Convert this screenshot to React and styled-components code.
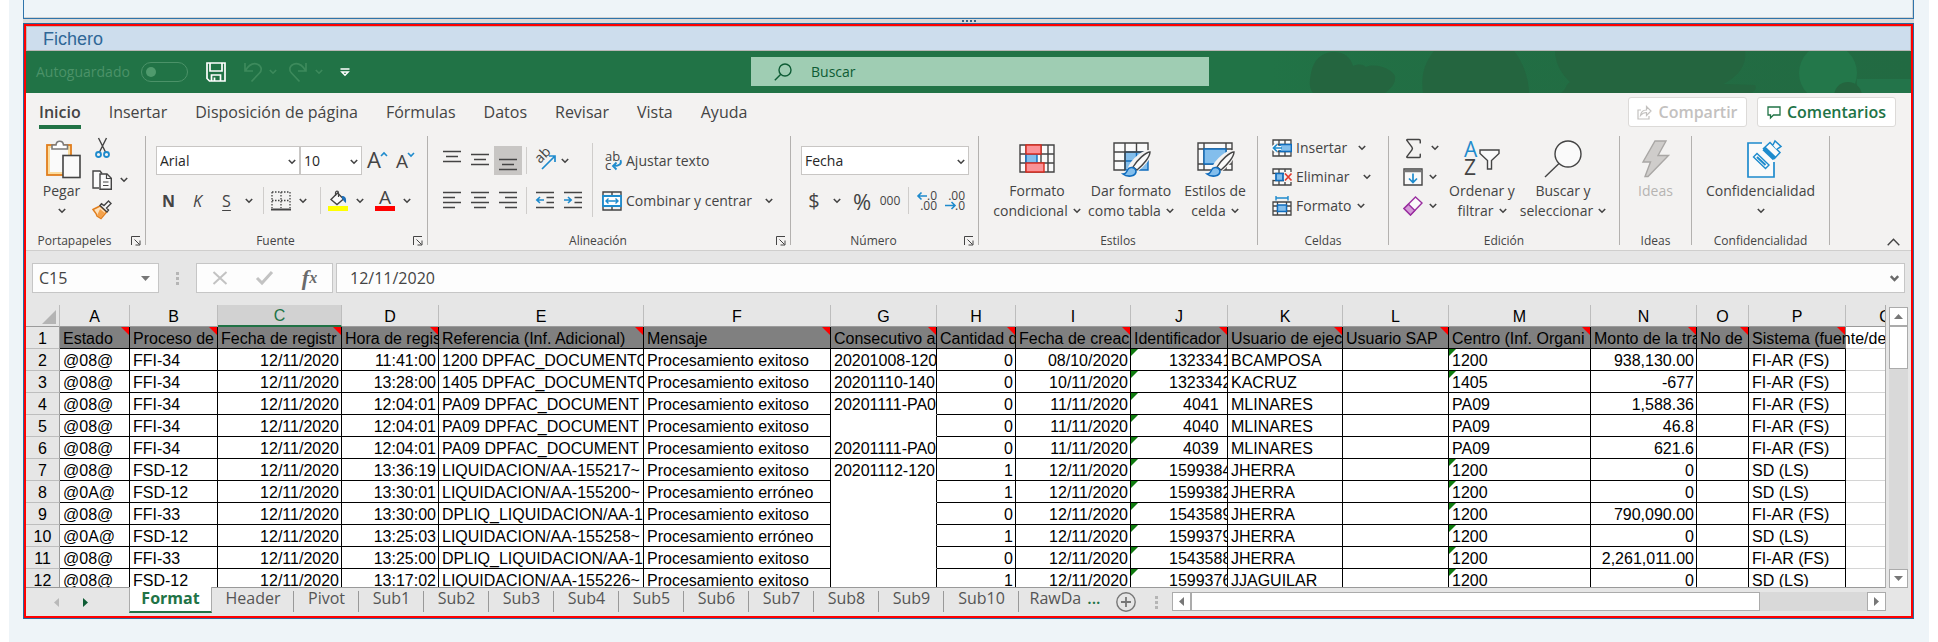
import React from 'react';
import styled, { createGlobalStyle, css } from 'styled-components';
import { Sigma } from 'lucide-react';

const UI = '"Open Sans", "Noto Sans", sans-serif';
const GRID = '"Liberation Sans", Arial, sans-serif';
const INK = '#444444';
const BLUE = '#1e8bcd';
const GREEN = '#217346';

const Global = createGlobalStyle`
  *, *::before, *::after { box-sizing: border-box; }
  body { margin: 0; background: #ffffff; font-family: ${UI}; color: ${INK}; }
  button, input, select { font: inherit; color: inherit; margin: 0; padding: 0; border: 0; border-radius: 0; background: none; }
  button { cursor: pointer; }
  svg { display: block; flex: none; overflow: visible; }
`;

/* ---------- host page ---------- */

const Page = styled.main`
  min-height: 100vh;
  margin: 0 9px;
  padding: 0 15px 23px 14px;
  background: #eef4f8;
`;
const UpperPanel = styled.section`
  height: 19px;
  border: 1px solid #2f74ab;
  border-top: 0;
  box-shadow: inset -1px -1px 0 #d2d2d2;
`;
const Splitter = styled.div`
  height: 4px;
  display: flex;
  justify-content: center;
  align-items: center;
  gap: 2px;
  background: #dadada;
`;
const SplitterDot = styled.i`
  width: 2px;
  height: 2px;
  background: #3c6483;
`;
const LowerPanel = styled.section`
  border: 1px solid #2a6a9c;
`;
const Window = styled.div`
  border: 2px solid #ff0000;
  background: #e6e6e6;
  overflow: hidden;
`;
const PanelTitle = styled.h1`
  margin: 0;
  height: 25px;
  padding-left: 16px;
  border: 1px solid #b8b8b8;
  background: #cddded;
  font: 400 18px/25px ${GRID};
  color: #2f6797;
`;

/* ---------- title bar ---------- */

const TitleBar = styled.header`
  position: relative;
  height: 42px;
  display: grid;
  grid-template-columns: minmax(0, 725fr) 458px minmax(0, 702fr);
  align-items: center;
  background: ${GREEN};
`;
const BarArt = styled.svg`
  position: absolute;
  right: 0;
  top: 0;
  overflow: hidden;
`;
const QuickAccess = styled.div`
  display: flex;
  align-items: center;
  padding-left: 10px;
  color: #4b9268;
  font-size: 14px;
  line-height: 20px;
`;
const AutoSave = styled.label`
  display: flex;
  align-items: center;
  justify-content: space-between;
  width: 152px;
`;
const Toggle = styled.input`
  appearance: none;
  width: 47px;
  height: 20px;
  border: 1px solid #4b9268;
  border-radius: 10px;
  &::before {
    content: '';
    display: block;
    width: 10px;
    height: 10px;
    margin: 4px;
    border-radius: 50%;
    background: #4f9a6d;
  }
`;
const BarButton = styled.button`
  display: flex;
  align-items: center;
  justify-content: center;
  width: ${(p) => p.$w}px;
  height: 28px;
  color: #3d8a5c;
`;
const Search = styled.label`
  display: flex;
  align-items: center;
  height: 29px;
  margin-bottom: 1px;
  padding-left: 23px;
  gap: 19px;
  background: #9fcdb3;
  color: #0e5c35;
  input { flex: 1; min-width: 0; height: 29px; font-size: 14px; outline: 0; }
  input::placeholder { color: #0e5c35; opacity: 1; }
`;

/* ---------- ribbon ---------- */

const TabBar = styled.div`
  display: flex;
  align-items: flex-start;
  justify-content: space-between;
  height: 43px;
  padding: 4px 15px 0 13px;
  background: #f3f2f1;
`;
const Tabs = styled.nav`
  display: flex;
  gap: 28px;
`;
const Tab = styled.button`
  height: 32px;
  padding: 0 0 2px;
  font-size: 16px;
  line-height: 26px;
  ${(p) => p.$active && css`
    font-weight: 600;
    border-bottom: 4px solid ${GREEN};
    padding: 2px 0 0;
  `}
`;
const TabActions = styled.div`
  display: flex;
  gap: 10px;
`;
const ActionButton = styled.button`
  display: flex;
  align-items: center;
  justify-content: center;
  gap: 6px;
  width: ${(p) => p.$w}px;
  height: 30px;
  border: 1px solid #dcdad8;
  border-radius: 3px;
  background: #ffffff;
  font-size: 16px;
  font-weight: 600;
  color: ${(p) => (p.disabled ? '#c3c1bf' : GREEN)};
`;
const Ribbon = styled.div`
  display: flex;
  height: 115px;
  border-bottom: 1px solid #cfcecd;
  background: #f3f2f1;
`;
const Group = styled.section`
  flex: none;
  display: flex;
  flex-direction: column;
  width: ${(p) => p.$w}px;
`;
const Divider = styled.i`
  flex: none;
  width: 1px;
  height: 109px;
  background: #b3b1af;
`;
const GroupBody = styled.div`
  display: flex;
  height: 96px;
  padding-left: ${(p) => p.$pad || 0}px;
`;
const GroupFoot = styled.footer`
  display: flex;
  align-items: center;
  height: 18px;
  font-size: 12px;
  line-height: 16px;
  span { flex: 1; text-align: center; }
`;
const Launcher = styled.button`
  width: 22px;
  height: 10px;
  padding-left: 8px;
`;
const TwoRows = styled.div`
  display: flex;
  flex-direction: column;
  gap: 11px;
  padding-top: 10px;
  padding-left: ${(p) => p.$pad || 0}px;
  width: ${(p) => (p.$w ? `${p.$w}px` : 'auto')};
`;
const ThreeRows = styled.div`
  display: flex;
  flex-direction: column;
  gap: 5px;
  width: ${(p) => (p.$w ? `${p.$w}px` : 'auto')};
`;
const Row = styled.div`
  display: flex;
  align-items: center;
  height: ${(p) => p.$h || 29}px;
  padding-left: ${(p) => p.$pad || 0}px;
`;
const Tool = styled.button`
  flex: none;
  display: flex;
  align-items: center;
  justify-content: center;
  width: ${(p) => p.$w || 28}px;
  height: ${(p) => p.$h || 29}px;
  font-size: ${(p) => p.$size || 16}px;
  line-height: 22px;
  font-weight: ${(p) => (p.$bold ? 700 : 400)};
  font-style: ${(p) => (p.$italic ? 'italic' : 'normal')};
  text-decoration: ${(p) => (p.$underline ? 'underline' : 'none')};
  text-underline-offset: 3px;
  background: ${(p) => (p.$pressed ? '#c8c6c4' : 'none')};
`;
const TextTool = styled.button`
  display: flex;
  align-items: center;
  gap: 4px;
  height: ${(p) => p.$h || 29}px;
  font-size: 14px;
  line-height: 20px;
  white-space: nowrap;
`;
const Rule = styled.i`
  flex: none;
  width: 1px;
  height: ${(p) => (p.$tall ? 74 : 27)}px;
  margin: ${(p) => (p.$tall ? '7px 0 0 5px' : `0 ${p.$gap}px`)};
  background: #cfcdcb;
`;
const SelectBox = styled.span`
  position: relative;
  width: ${(p) => p.$w}px;
  height: 29px;
  select {
    appearance: none;
    width: 100%;
    height: 29px;
    padding-left: 3px;
    border: 1px solid #c8c6c4;
    background: #ffffff;
    font-size: 14px;
    color: #262626;
  }
  svg { position: absolute; right: 4px; top: 13px; pointer-events: none; }
`;
const BigTool = styled.button`
  flex: none;
  display: flex;
  flex-direction: column;
  align-items: center;
  justify-content: flex-start;
  width: ${(p) => p.$w}px;
  height: 90px;
  padding-left: ${(p) => p.$pad || 0}px;
  font-size: 14px;
  line-height: 20px;
  white-space: nowrap;
  color: ${(p) => (p.disabled ? '#b6b4b2' : INK)};
`;
const BigIcon = styled.span`
  display: flex;
  align-items: center;
  height: 45px;
`;
const BigLine = styled.span`
  display: flex;
  align-items: center;
  gap: 5px;
  height: 20px;
`;
const RibbonEnd = styled.div`
  flex: 1;
  display: flex;
  justify-content: flex-end;
  align-items: flex-end;
  padding: 0 11px 4px 0;
`;

/* ---------- formula bar ---------- */

const FormulaBar = styled.div`
  display: flex;
  align-items: center;
  padding: 12px 6px;
  font-size: 16px;
`;
const Field = styled.div`
  display: flex;
  align-items: center;
  height: 30px;
  width: ${(p) => (p.$w ? `${p.$w}px` : 'auto')};
  flex: ${(p) => (p.$w ? 'none' : '1')};
  padding-right: ${(p) => p.$end || 0}px;
  border: 1px solid #c6c6c6;
  background: #fdfdfd;
  input { flex: 1; min-width: 0; height: 28px; padding-left: ${(p) => p.$pad}px; outline: 0; }
`;
const Grip = styled.span`
  display: grid;
  align-content: center;
  justify-content: center;
  gap: 2px;
  width: ${(p) => p.$w}px;
  i { width: 3px; height: 3px; background: #b5b5b5; }
`;
const FormulaKeys = styled.div`
  display: flex;
  width: 137px;
  height: 30px;
  margin-right: 3px;
  border: 1px solid #c6c6c6;
  background: #fdfdfd;
`;
const FormulaKey = styled.button`
  flex: 1;
  display: flex;
  align-items: center;
  justify-content: center;
`;
const Fx = styled(FormulaKey)`
  font: italic 700 22px/26px "Liberation Serif", serif;
  color: #6a6a6a;
  small { font-size: 16px; }
`;

/* ---------- sheet ---------- */

const SheetArea = styled.div`
  display: flex;
  gap: 3px;
  padding-right: 3px;
`;
const Viewport = styled.div`
  flex: 1;
  min-width: 0;
  height: 283px;
  overflow: hidden;
  border-right: 1px solid #ababab;
  border-bottom: 1px solid #999999;
`;
const Sheet = styled.table`
  table-layout: fixed;
  width: 1900px;
  border-collapse: separate;
  border-spacing: 0;
  font: 400 16px/19px ${GRID};
  color: #000000;
  white-space: nowrap;
`;
const ColHead = styled.th`
  height: 22px;
  padding: 2px 0 0;
  font-weight: 400;
  border-right: 1px solid #bdbdbd;
  border-bottom: 1px solid #9b9b9b;
  background: #e6e6e6;
  ${(p) => p.$active && css`
    color: ${GREEN};
    background: #d2d2d2;
    border-bottom: 2px solid ${GREEN};
    line-height: 18px;
  `}
`;
const Corner = styled.i`
  display: block;
  width: 0;
  height: 0;
  margin: 0 3px 0 auto;
  border-bottom: 14px solid #b4b4b4;
  border-left: 14px solid transparent;
`;
const RowHead = styled.th`
  height: 22px;
  padding: 2px 0 0;
  font-weight: 400;
  border-right: 1px solid #9b9b9b;
  border-bottom: 1px solid #bdbdbd;
  background: #e6e6e6;
`;
const FieldHead = styled.th`
  position: relative;
  height: 22px;
  padding: 2px 0 0 3px;
  overflow: ${(p) => (p.$spill ? 'visible' : 'hidden')};
  text-align: left;
  font-weight: 400;
  background: #808080;
  border-right: 1px solid ${(p) => (p.$spill ? '#808080' : '#000000')};
  border-bottom: 1px solid #000000;
  &::after {
    content: '';
    position: absolute;
    top: 0;
    right: 0;
    border-top: 8px solid #ff0000;
    border-left: 8px solid transparent;
  }
`;
const Cell = styled.td`
  position: relative;
  height: 22px;
  padding: 2px 2px 0 ${(p) => p.$indent || 3}px;
  overflow: hidden;
  text-overflow: clip;
  text-align: ${(p) => (p.$right ? 'right' : 'left')};
  background: #ffffff;
  border-right: 1px solid #000000;
  border-bottom: 1px solid ${(p) => (p.$open ? '#ffffff' : '#000000')};
  ${(p) => p.$flag && css`
    &::before {
      content: '';
      position: absolute;
      top: 0;
      left: 0;
      border-top: 7px solid #0f7b0f;
      border-right: 7px solid transparent;
    }
  `}
`;
const EmptyCell = styled.td`
  height: 22px;
  padding: 0;
  background: #ffffff;
  border-bottom: 1px solid #d4d4d4;
`;
const VScroll = styled.div`
  display: flex;
  flex-direction: column;
  width: 19px;
  margin-top: 2px;
  background: #d9d9d9;
`;
const HScroll = styled.div`
  flex: 1;
  display: flex;
  height: 19px;
  margin-top: 4px;
  background: #d9d9d9;
`;
const ScrollKey = styled.button`
  flex: none;
  display: flex;
  align-items: center;
  justify-content: center;
  width: 19px;
  height: 19px;
  border: 1px solid #ababab;
  background: #ffffff;
`;
const Thumb = styled.i`
  border: 1px solid #ababab;
  background: #ffffff;
  ${(p) => (p.$vertical
    ? css`height: 43px; margin-bottom: auto;`
    : css`flex: 1; margin-right: 107px;`)}
`;
const SheetBar = styled.div`
  display: flex;
  height: 28px;
  padding-right: 25px;
`;
const SheetNav = styled.div`
  flex: none;
  display: flex;
  align-items: center;
  gap: 24px;
  width: 103px;
  padding-left: 28px;
`;
const SheetTab = styled.button`
  flex: none;
  width: ${(p) => p.$w}px;
  height: 25px;
  padding-bottom: 4px;
  font-size: 16px;
  line-height: 21px;
  color: #555555;
  background: ${(p) => (p.$last ? 'none' : 'linear-gradient(#999999, #999999) no-repeat right 3px / 1px 21px')};
  ${(p) => p.$active && css`
    position: relative;
    margin-top: -1px;
    height: 26px;
    padding-bottom: 2px;
    color: ${GREEN};
    font-weight: 700;
    background: #ffffff;
    border: 1px solid #ababab;
    border-top: 0;
    border-bottom: 2px solid ${GREEN};
  `}
`;
const MoreSheets = styled.span`
  margin-left: 6px;
  color: ${GREEN};
  font-weight: 600;
`;
const AddSheet = styled.button`
  width: 30px;
  height: 28px;
  display: flex;
  align-items: center;
  justify-content: center;
`;

/* ---------- icons ---------- */

const Svg = ({ w, h, children, ...rest }) => (
  <svg width={w} height={h} viewBox={`0 0 ${w} ${h}`} fill="none" stroke={INK} strokeWidth="1.4" aria-hidden="true" {...rest}>
    {children}
  </svg>
);
const Chevron = ({ color = INK }) => (
  <Svg w={8} h={6} stroke={color} strokeWidth="1.6"><path d="M.8 1 4 4.2 7.2 1" /></Svg>
);
const Drop = ({ w = 14 }) => <Tool $w={w} $h={20} aria-label="Más opciones"><Chevron /></Tool>;
const LauncherIcon = () => (
  <Svg w={10} h={10} strokeWidth="1"><path d="M.5 9V.5H9M3.5 3.5 8.5 8.5M9 4.5V9H4.5" /></Svg>
);
const Triangle = ({ dir, color = '#777777' }) => {
  const paths = { up: 'M0 5 4.5 0 9 5Z', down: 'M0 0 4.5 5 9 0Z', left: 'M5 0 0 4.5 5 9Z', right: 'M0 0 5 4.5 0 9Z' };
  const tall = dir === 'left' || dir === 'right';
  return <Svg w={tall ? 5 : 9} h={tall ? 9 : 5} stroke="none" fill={color}><path d={paths[dir]} /></Svg>;
};
const SearchIcon = () => (
  <Svg w={18} h={18} stroke="#0e5c35">
    <circle cx="11" cy="7" r="6" />
    <path d="M6.8 11.2.8 17.2" />
  </Svg>
);
const SaveIcon = () => (
  <Svg w={20} h={20} stroke="#ffffff" strokeWidth="1.7">
    <path d="M1 1h18v18H3.5L1 16.5ZM4 1v8h12V1M5.5 19v-6h9v6M8.5 15.5V19" />
  </Svg>
);
const UndoIcon = ({ flip }) => (
  <Svg w={18} h={20} stroke="currentColor" strokeWidth="1.7">
    <path transform={flip ? 'translate(18 0) scale(-1 1)' : undefined} d="M1 1v8h8M1.3 8.7C4.5 3.5 9 .5 13.5 2.2c4.3 1.8 4.7 6 2 8.800L7.5 19.5" />
  </Svg>
);
const CustomizeIcon = () => (
  <Svg w={10} h={9} stroke="#ffffff"><path d="M.5 1h9M1.8 4 5 7.2 8.2 4Z" /></Svg>
);
const ShareIcon = () => (
  <Svg w={15} h={15} stroke="#c3c1bf" strokeWidth="1.2">
    <path d="M4 5H1v9h11v-3M3.5 10.5C4 6.5 6.5 5 9.5 5V1.5L14 6l-4.5 4.5V7.5c-2.5 0-4 .5-6 3Z" />
  </Svg>
);
const CommentIcon = () => (
  <Svg w={14} h={13} stroke={GREEN} strokeWidth="1.3"><path d="M1 1h12v8H6.5L3.5 12V9H1Z" /></Svg>
);
const PasteIcon = () => (
  <Svg w={36} h={40}>
    <rect x="3" y="6" width="24" height="30" stroke="#e07d1c" strokeWidth="1.8" fill="#fbdc9e" />
    <path d="M6 9h18v24H6Z" fill="#fafafa" stroke="none" />
    <path d="M8 10V6h4c.5-5 7-5 7.5 0h4v4Z" fill="#ffffff" stroke="#7a7a7a" strokeWidth="1.6" />
    <rect x="19" y="16.5" width="17" height="22" fill="#fafafa" strokeWidth="1.6" />
  </Svg>
);
const CutIcon = () => (
  <Svg w={20} h={20}>
    <path d="M6.5 0l7 14M14.5 0l-7 14" />
    <circle cx="6.5" cy="16.5" r="2.5" stroke={BLUE} strokeWidth="1.8" />
    <circle cx="14.5" cy="16.5" r="2.5" stroke={BLUE} strokeWidth="1.8" />
  </Svg>
);
const CopyIcon = () => (
  <Svg w={20} h={20}>
    <path d="M7 18H1V1h7l2 2.5" fill="#fafafa" />
    <path d="M8 4h7l4.3 4.3V19.3H8Z" fill="#fafafa" />
    <path d="M14.5 4v4.5H19M11 12h5.5M11 15.5h5.5" strokeWidth="1.2" />
  </Svg>
);
const BrushIcon = () => (
  <Svg w={20} h={20}>
    <path d="M1 9.5 8 6l6.5 6L9 18.5 5 16l-1-2.5Z" fill="#ffe3bd" stroke="#e07d1c" strokeWidth="1.5" />
    <path d="M5 15.5 9 18l4-5-5-4Z" fill="#f4a24b" stroke="none" />
    <path d="M8 5.5 15 12l1.5-2L14.5 8 19 3.5 16.5 1 12 5.5 9.5 3.8Z" fill="#fafafa" />
  </Svg>
);
const FontStep = ({ up }) => (
  <Svg w={20} h={22}>
    <text x="0" y="18" fontFamily="Open Sans" fontSize={up ? 22 : 19} fill={INK} stroke="none">A</text>
    <path d={up ? 'M14 6l3-3 3 3' : 'M12 3l3 3 3-3'} stroke={BLUE} strokeWidth="1.6" />
  </Svg>
);
const BordersIcon = () => (
  <Svg w={20} h={20}>
    <path d="M1 1h18M1 1v16M19 1v16M10 1v16M1 9.5h18" strokeDasharray="1.5 1.5" strokeWidth="1.3" />
    <path d="M0 18.5h20" strokeWidth="2" />
  </Svg>
);
const FillIcon = () => (
  <Svg w={22} h={22}>
    <path d="M4 9.5 10.5 3l6 6L10 14.5Z" fill="#fafafa" />
    <path d="M8.5 6V3c0-2.5 3-2.5 3 0v4" strokeWidth="1.2" />
    <path d="M15 6c3.5 0 4.5 2 4 7-1.5-.5-2.5-2.5-4-4.5Z" fill="#1e6fb8" stroke="none" />
    <rect x="1" y="16" width="20" height="5" fill="#ffff00" stroke="none" />
  </Svg>
);
const FontColorIcon = () => (
  <Svg w={22} h={22}>
    <text x="5" y="14" fontFamily="Open Sans" fontSize="19" fill={INK} stroke="none">A</text>
    <rect x="1" y="16" width="20" height="5" fill="#ff0000" stroke="none" />
  </Svg>
);
const VAlignIcon = ({ at }) => {
  const y = { top: 2, middle: 5, bottom: 10 }[at];
  return <Svg w={18} h={24} strokeWidth="1.5"><path d={`M0 ${y}.5h18M3 ${y + 5}.5h12M0 ${y + 10}.5h18`} /></Svg>;
};
const HAlignIcon = ({ at }) => {
  const x = { left: 0, center: 3, right: 6 }[at];
  return (
    <Svg w={18} h={18} strokeWidth="1.6">
      <path d={`M0 .5h18M${x} 5.5h12M0 10.5h18M${x} 15.5h12`} />
    </Svg>
  );
};
const OrientationIcon = () => (
  <Svg w={22} h={22}>
    <text transform="translate(6 14) rotate(-45)" fontFamily="Open Sans" fontSize="14" fill={INK} stroke="none">ab</text>
    <path d="M8 19 20.5 6.5M15 6h6v6" stroke={BLUE} strokeWidth="1.7" />
  </Svg>
);
const IndentIcon = ({ right }) => (
  <Svg w={18} h={18} strokeWidth="1.6">
    <path d="M0 .5h18M10.5 5.5H18M10.5 10.5H18M0 15.5h18" />
    <path d={right ? 'M0 8h7M4 5l3.2 3L4 11' : 'M8 8H1M4 5 .8 8 4 11'} stroke={BLUE} />
  </Svg>
);
const WrapIcon = () => (
  <Svg w={20} h={22}>
    <text x="3" y="11" fontFamily="Open Sans" fontSize="13" fill={INK} stroke="none">ab</text>
    <text x="3" y="20" fontFamily="Open Sans" fontSize="13" fill={INK} stroke="none">c</text>
    <path d="M18.5 10c1.5 4-1 6-7 6M14.5 12.5 11 16l3.5 3.5" stroke={BLUE} strokeWidth="1.8" />
  </Svg>
);
const MergeIcon = () => (
  <Svg w={20} h={20}>
    <path d="M1 1h18v18H1ZM10 1v4M10 15v4" />
    <path d="M1 5h18v10H1Z" fill="#ffffff" stroke={BLUE} strokeWidth="1.8" />
    <path d="M4 10h12M6.5 7.5 4 10l2.5 2.5M13.5 7.5 16 10l-2.5 2.5" stroke={BLUE} />
  </Svg>
);
const DecimalIcon = ({ less }) => (
  <Svg w={20} h={22}>
    <g fontFamily="Open Sans" fontSize="12" fill={INK} stroke="none" textAnchor="end">
      <text x="20" y="10">{less ? '.00' : '.0'}</text>
      <text x="20" y="20">{less ? '.0' : '.00'}</text>
    </g>
    <path d={less ? 'M0 15.5h10M6.5 12l3.5 3.5L6.5 19' : 'M10 6H1M4.5 2.5 1 6l3.5 3.5'} stroke={BLUE} strokeWidth="1.6" />
  </Svg>
);
const ConditionalIcon = () => (
  <Svg w={36} h={30}>
    <path d="M1 1h34v27H1ZM1 10h34M1 19h34M7 1v27M22 1v27M29 1v27" fill="#fafafa" />
    <path d="M7 10h11v9H7Z" fill="#83beec" stroke="#0f6cbd" />
    <path d="M7 1h15v9H7ZM7 19h18v9H7Z" fill="#fb9297" stroke="#d92c20" />
  </Svg>
);
const PaintBrush = () => (
  <>
    <path d="M16 28C20 17 32 9 37 10c1 4-8 14-15 19Z" fill="#f3f2f1" stroke="#f3f2f1" strokeWidth="4" />
    <path d="M20 25C24 18 33 10 37 10c0 5-7 13-13 18Z" fill="#fafafa" />
    <path d="M10 32c3 0 3.5-1.5 4.5-4 1.5-3 6-3.5 8-.5 1.5 3-.5 6-4.5 6.5-3 .3-6-.2-8-2Z" fill="#83beec" stroke="#0f6cbd" strokeWidth="1.6" />
  </>
);
const TableFormatIcon = () => (
  <Svg w={36} h={34}>
    <path d="M1 1h34v27H1Z" fill="#fafafa" stroke="none" />
    <path d="M12 10h23v18H12Z" fill="#83beec" stroke="#0f6cbd" />
    <path d="M12 19h23M23.5 10v18" stroke="#0f6cbd" />
    <path d="M35 10V1H1v27h11M1 10h34M1 19h11M12 1v27M23.5 1v9" />
    <PaintBrush />
  </Svg>
);
const CellStyleIcon = () => (
  <Svg w={36} h={34}>
    <path d="M1 1h34v27H1ZM1 7h34M1 22h34M7 1v27M29 1v27" fill="#fafafa" />
    <path d="M7 7h22v15H7Z" fill="#83beec" stroke="#0f6cbd" />
    <PaintBrush />
  </Svg>
);
const InsertCellsIcon = () => (
  <Svg w={20} h={18}>
    <path d="M1 1h18v16H1ZM1 5.5h18M1 12.5h18M7 1v16M13 1v16" fill="#fafafa" strokeWidth="1.3" />
    <path d="M8 5.5h11.3v7H8Z" fill="#83beec" stroke="#0f6cbd" />
    <path d="M9 9H1M5 5 1 9l4 4" stroke="#fafafa" strokeWidth="4" />
    <path d="M10 9H1.5M5 5.5 1.5 9 5 12.5" stroke={BLUE} strokeWidth="1.7" />
  </Svg>
);
const DeleteCellsIcon = () => (
  <Svg w={20} h={18}>
    <path d="M1 1h18v16H1ZM1 5.5h18M1 12.5h18M7 1v16M13 1v16" fill="#fafafa" strokeWidth="1.3" />
    <path d="M0 6.2h20v5.6H0Z" fill="#f3f2f1" stroke="none" />
    <path d="M4 5.5h7v7H4Z" fill="#83beec" stroke="#0f6cbd" strokeWidth="1.7" />
    <path d="M12 4h8v10h-8Z" fill="#f3f2f1" stroke="none" />
    <path d="M13 5.5 19.5 12.5M19.5 5.5 13 12.5" stroke="#e23b30" strokeWidth="1.7" />
  </Svg>
);
const FormatCellsIcon = () => (
  <Svg w={20} h={20}>
    <path d="M1 6h18v13H1ZM1 10h18M1 15h18M5.5 6v13M14.5 6v13" fill="#fafafa" strokeWidth="1.3" />
    <path d="M5.5 9h9v6.5h-9Z" fill="#83beec" stroke="#0f6cbd" />
    <path d="M4 2h12M4 0v4.5M16 0v4.5" stroke={BLUE} />
  </Svg>
);
const FillDownIcon = () => (
  <Svg w={20} h={18}>
    <path d="M1 1h18v16H1Z" fill="#fafafa" />
    <path d="M1 3h18" strokeWidth="2.5" stroke="#777777" />
    <path d="M10 5.5v9M6 10.5l4 4 4-4" stroke={BLUE} strokeWidth="1.7" />
  </Svg>
);
const EraserIcon = () => (
  <Svg w={20} h={20} stroke="#9a2fa0">
    <path d="M12.5 1 19 7 7.5 19 1 12.5Z" fill="#fafafa" />
    <path d="M5.5 8.2 11.8 14.5 7.5 19 1 12.5Z" fill="#d59ad8" />
  </Svg>
);
const SortFilterIcon = () => (
  <Svg w={38} h={38}>
    <text x="1" y="17" fontFamily="Open Sans" fontSize="21" fill={BLUE} stroke="none">A</text>
    <text x="1" y="35" fontFamily="Open Sans" fontSize="21" fill={INK} stroke="none">Z</text>
    <path d="M17 10h19v3.5l-7.5 7V29h-4v-8.5l-7.5-7Z" fill="#fafafa" />
  </Svg>
);
const FindIcon = () => (
  <Svg w={38} h={38}>
    <circle cx="24" cy="14" r="13" fill="#fafafa" />
    <path d="M15 23.5 1 37" />
  </Svg>
);
const BoltIcon = () => (
  <Svg w={28} h={38} stroke="#a9a7a5">
    <path d="M13 1h11l-8 14.5h10.5L6 36.5H3L8.5 22H1Z" fill="#cfcdcb" />
  </Svg>
);
const SensitivityIcon = () => (
  <Svg w={28} h={40} stroke={BLUE} strokeWidth="1.7">
    <path d="M16 4H1v34h26V12Z" fill="#fafafa" stroke="none" />
    <path d="M15 4H1v34h26V23" />
    <path d="M6.5 18 10 14.5 22 26l-3.5 3.5Z" fill="#fafafa" strokeWidth="1.4" />
    <path d="M10 18l8.5 8" strokeWidth="2" />
    <path d="M16.5 9.5 23 3.5 33 13.5 27.5 19.5Z" fill="#fafafa" strokeWidth="1.5" />
    <path d="M17 9.5 27.5 19.5" strokeWidth="4.5" />
    <path d="M26 6l2-4 6 5.5-4.5 3" fill="#fafafa" strokeWidth="1.5" />
  </Svg>
);
const CancelIcon = () => <Svg w={16} h={14} stroke="#c3c3c3" strokeWidth="2"><path d="M1.5 1 14.5 13M14.5 1 1.5 13" /></Svg>;
const CheckIcon = () => <Svg w={17} h={14} stroke="#c3c3c3" strokeWidth="3"><path d="M1 7l5 5L16 1" /></Svg>;
const PlusIcon = () => (
  <Svg w={20} h={20} stroke="#777777"><circle cx="10" cy="10" r="9.2" /><path d="M10 5v10M5 10h10" strokeWidth="1.8" /></Svg>
);

/* ---------- data ---------- */

const MENU = ['Inicio', 'Insertar', 'Disposición de página', 'Fórmulas', 'Datos', 'Revisar', 'Vista', 'Ayuda'];

const COLUMNS = [
  ['A', 70, 'Estado'],
  ['B', 88, 'Proceso de'],
  ['C', 124, 'Fecha de registr'],
  ['D', 97, 'Hora de regis'],
  ['E', 205, 'Referencia (Inf. Adicional)'],
  ['F', 187, 'Mensaje'],
  ['G', 106, 'Consecutivo a'],
  ['H', 79, 'Cantidad d'],
  ['I', 115, 'Fecha de creac'],
  ['J', 97, 'Identificador'],
  ['K', 115, 'Usuario de ejec'],
  ['L', 106, 'Usuario SAP'],
  ['M', 142, 'Centro (Inf. Organi'],
  ['N', 106, 'Monto de la tra'],
  ['O', 52, 'No de'],
  ['P', 97, 'Sistema (fuente/de'],
];
const RIGHT = new Set(['C', 'D', 'H', 'I', 'N']);

const OK = 'Procesamiento exitoso';
const BAD = 'Procesamiento erróneo';
const DAY = '12/11/2020';
const FI = 'FI-AR (FS)';
const SD = 'SD (LS)';
const ROWS = [
  ['@08@', 'FFI-34', DAY, '11:41:00', '1200 DPFAC_DOCUMENTO', OK, '20201008-120', '0', '08/10/2020', '1323341', 'BCAMPOSA', '', '1200', '938,130.00', '', FI],
  ['@08@', 'FFI-34', DAY, '13:28:00', '1405 DPFAC_DOCUMENTO', OK, '20201110-140', '0', '10/11/2020', '1323342', 'KACRUZ', '', '1405', '-677', '', FI],
  ['@08@', 'FFI-34', DAY, '12:04:01', 'PA09 DPFAC_DOCUMENT', OK, '20201111-PA0', '0', '11/11/2020', '4041', 'MLINARES', '', 'PA09', '1,588.36', '', FI],
  ['@08@', 'FFI-34', DAY, '12:04:01', 'PA09 DPFAC_DOCUMENT', OK, '', '0', '11/11/2020', '4040', 'MLINARES', '', 'PA09', '46.8', '', FI],
  ['@08@', 'FFI-34', DAY, '12:04:01', 'PA09 DPFAC_DOCUMENT', OK, '20201111-PA0', '0', '11/11/2020', '4039', 'MLINARES', '', 'PA09', '621.6', '', FI],
  ['@08@', 'FSD-12', DAY, '13:36:19', 'LIQUIDACION/AA-155217~', OK, '20201112-120', '1', DAY, '1599384', 'JHERRA', '', '1200', '0', '', SD],
  ['@0A@', 'FSD-12', DAY, '13:30:01', 'LIQUIDACION/AA-155200~', BAD, '', '1', DAY, '1599382', 'JHERRA', '', '1200', '0', '', SD],
  ['@08@', 'FFI-33', DAY, '13:30:00', 'DPLIQ_LIQUIDACION/AA-1', OK, '', '0', DAY, '1543589', 'JHERRA', '', '1200', '790,090.00', '', FI],
  ['@0A@', 'FSD-12', DAY, '13:25:03', 'LIQUIDACION/AA-155258~', BAD, '', '1', DAY, '1599379', 'JHERRA', '', '1200', '0', '', SD],
  ['@08@', 'FFI-33', DAY, '13:25:00', 'DPLIQ_LIQUIDACION/AA-1', OK, '', '0', DAY, '1543588', 'JHERRA', '', '1200', '2,261,011.00', '', FI],
  ['@08@', 'FSD-12', DAY, '13:17:02', 'LIQUIDACION/AA-155226~', OK, '', '1', DAY, '1599376', 'JJAGUILAR', '', '1200', '0', '', SD],
];

const SHEETS = [
  ['Format', 83], ['Header', 82], ['Pivot', 65],
  ['Sub1', 65], ['Sub2', 65], ['Sub3', 65], ['Sub4', 65], ['Sub5', 65], ['Sub6', 65], ['Sub7', 65], ['Sub8', 65], ['Sub9', 65],
  ['Sub10', 75], ['RawDa', 92],
];

/* ---------- parts ---------- */

const RibbonGroup = ({ title, w, pad, launcher, children }) => (
  <>
    <Group $w={w} aria-label={title}>
      <GroupBody $pad={pad}>{children}</GroupBody>
      <GroupFoot>
        <span>{title}</span>
        {launcher && <Launcher aria-label={`Configurar ${title}`}><LauncherIcon /></Launcher>}
      </GroupFoot>
    </Group>
    <Divider />
  </>
);

const Select = ({ w, value, label }) => (
  <SelectBox $w={w}>
    <select aria-label={label} defaultValue={value}><option>{value}</option></select>
    <Chevron />
  </SelectBox>
);

const Big = ({ w, pad, icon, lines, menu, disabled }) => (
  <BigTool $w={w} $pad={pad} disabled={disabled}>
    <BigIcon>{icon}</BigIcon>
    {lines.map((line, i) => (
      <BigLine key={line || i}>
        {line}
        {menu && i === lines.length - 1 && <Chevron />}
      </BigLine>
    ))}
  </BigTool>
);

const RibbonTools = () => (
  <Ribbon>
    <RibbonGroup title="Portapapeles" w={119} launcher>
      <Big w={65} pad={6} icon={<PasteIcon />} lines={['Pegar', '']} menu />
      <ThreeRows>
        <Row $h={24}><Tool $w={22} $h={24} aria-label="Cortar"><CutIcon /></Tool></Row>
        <Row $h={30}><Tool $w={22} $h={24} aria-label="Copiar"><CopyIcon /></Tool><Drop w={22} /></Row>
        <Row $h={20}><Tool $w={22} $h={20} aria-label="Copiar formato"><BrushIcon /></Tool></Row>
      </ThreeRows>
    </RibbonGroup>

    <RibbonGroup title="Fuente" w={281} launcher>
      <TwoRows>
        <Row $pad={10}>
          <Select w={144} value="Arial" label="Fuente" />
          <Select w={62} value="10" label="Tamaño de fuente" />
          <Tool $w={30} aria-label="Aumentar tamaño de fuente"><FontStep up /></Tool>
          <Tool $w={28} aria-label="Disminuir tamaño de fuente"><FontStep /></Tool>
        </Row>
        <Row $pad={8}>
          <Tool $w={29} $bold>N</Tool>
          <Tool $w={29} $italic>K</Tool>
          <Tool $w={29} $underline>S</Tool>
          <Drop w={16} />
          <Rule $gap={6} />
          <Tool $w={22} aria-label="Bordes"><BordersIcon /></Tool>
          <Drop w={22} />
          <Rule $gap={6} />
          <Tool $w={22} aria-label="Color de relleno"><FillIcon /></Tool>
          <Drop w={22} />
          <Tool $w={28} aria-label="Color de fuente"><FontColorIcon /></Tool>
          <Drop w={16} />
        </Row>
      </TwoRows>
    </RibbonGroup>

    <RibbonGroup title="Alineación" w={362} pad={10} launcher>
      <TwoRows $w={149}>
        <Row>
          <Tool aria-label="Alinear arriba"><VAlignIcon at="top" /></Tool>
          <Tool aria-label="Alinear en el medio"><VAlignIcon at="middle" /></Tool>
          <Tool $pressed aria-label="Alinear abajo"><VAlignIcon at="bottom" /></Tool>
          <Rule $gap={4} />
          <Tool aria-label="Orientación"><OrientationIcon /></Tool>
          <Drop w={12} />
        </Row>
        <Row>
          <Tool aria-label="Alinear a la izquierda"><HAlignIcon at="left" /></Tool>
          <Tool aria-label="Centrar"><HAlignIcon at="center" /></Tool>
          <Tool aria-label="Alinear a la derecha"><HAlignIcon at="right" /></Tool>
          <Rule $gap={4} />
          <Tool aria-label="Disminuir sangría"><IndentIcon /></Tool>
          <Tool aria-label="Aumentar sangría"><IndentIcon right /></Tool>
        </Row>
      </TwoRows>
      <Rule $tall />
      <TwoRows $pad={9}>
        <Row><TextTool><WrapIcon />Ajustar texto</TextTool></Row>
        <Row><TextTool><MergeIcon />Combinar y centrar</TextTool><Drop w={34} /></Row>
      </TwoRows>
    </RibbonGroup>

    <RibbonGroup title="Número" w={187} pad={10} launcher>
      <TwoRows>
        <Row><Select w={168} value="Fecha" label="Formato de número" /></Row>
        <Row>
          <Tool $w={26} $size={20}>$</Tool>
          <Drop w={20} />
          <Tool $w={30} $size={22}>%</Tool>
          <Tool $w={26} $size={12}>000</Tool>
          <Rule $gap={5} />
          <Tool $w={26} aria-label="Aumentar decimales"><DecimalIcon /></Tool>
          <Tool $w={30} aria-label="Disminuir decimales"><DecimalIcon less /></Tool>
        </Row>
      </TwoRows>
    </RibbonGroup>

    <RibbonGroup title="Estilos" w={278} pad={9}>
      <Big w={98} icon={<ConditionalIcon />} lines={['Formato', 'condicional']} menu />
      <Big w={90} icon={<TableFormatIcon />} lines={['Dar formato', 'como tabla']} menu />
      <Big w={78} icon={<CellStyleIcon />} lines={['Estilos de', 'celda']} menu />
    </RibbonGroup>

    <RibbonGroup title="Celdas" w={130} pad={14}>
      <ThreeRows>
        <Row $h={24}><TextTool $h={24}><InsertCellsIcon />Insertar</TextTool><Drop w={30} /></Row>
        <Row $h={24}><TextTool $h={24}><DeleteCellsIcon />Eliminar</TextTool><Drop w={36} /></Row>
        <Row $h={24}><TextTool $h={24}><FormatCellsIcon />Formato</TextTool><Drop w={18} /></Row>
      </ThreeRows>
    </RibbonGroup>

    <RibbonGroup title="Edición" w={230} pad={14}>
      <ThreeRows $w={42}>
        <Row $h={24}><Tool $w={20} $h={24} aria-label="Autosuma"><Sigma size={27} strokeWidth={1.3} /></Tool><Drop w={24} /></Row>
        <Row $h={24}><Tool $w={20} $h={24} aria-label="Rellenar"><FillDownIcon /></Tool><Drop w={20} /></Row>
        <Row $h={24}><Tool $w={20} $h={24} aria-label="Borrar"><EraserIcon /></Tool><Drop w={20} /></Row>
      </ThreeRows>
      <Big w={74} icon={<SortFilterIcon />} lines={['Ordenar y', 'filtrar']} menu />
      <Big w={88} icon={<FindIcon />} lines={['Buscar y', 'seleccionar']} menu />
    </RibbonGroup>

    <RibbonGroup title="Ideas" w={71}>
      <Big w={71} icon={<BoltIcon />} lines={['Ideas']} disabled />
    </RibbonGroup>

    <RibbonGroup title="Confidencialidad" w={137}>
      <Big w={137} icon={<SensitivityIcon />} lines={['Confidencialidad', '']} menu />
    </RibbonGroup>

    <RibbonEnd>
      <button aria-label="Contraer la cinta de opciones">
        <Svg w={13} h={8}><path d="M.7 7.2 6.5 1.2 12.3 7.2" /></Svg>
      </button>
    </RibbonEnd>
  </Ribbon>
);

const SheetGrid = () => (
  <Sheet>
    <colgroup>
      <col width="34" />
      {COLUMNS.map(([id, width]) => <col key={id} width={width} />)}
      <col />
    </colgroup>
    <thead>
      <tr>
        <ColHead aria-label="Seleccionar todo"><Corner /></ColHead>
        {COLUMNS.map(([id]) => <ColHead key={id} $active={id === 'C'}>{id}</ColHead>)}
        <ColHead>Q</ColHead>
      </tr>
    </thead>
    <tbody>
      <tr>
        <RowHead>1</RowHead>
        {COLUMNS.map(([id, , title]) => <FieldHead key={id} $spill={id === 'P'}>{title}</FieldHead>)}
        <EmptyCell />
      </tr>
      {ROWS.map((row, r) => (
        <tr key={r}>
          <RowHead>{r + 2}</RowHead>
          {row.map((value, c) => {
            const id = COLUMNS[c][0];
            return (
              <Cell
                key={id}
                $right={RIGHT.has(id)}
                $open={id === 'G' && (r === 2 || r === 3 || r > 4)}
                $indent={id === 'J' ? (value.length > 4 ? 38 : 52) : 3}
                $flag={id === 'J' || (id === 'M' && value !== 'PA09')}
              >
                {value}
              </Cell>
            );
          })}
          <EmptyCell />
        </tr>
      ))}
    </tbody>
  </Sheet>
);

export default function App() {
  return (
    <Page>
      <Global />
      <UpperPanel />
      <Splitter><SplitterDot /><SplitterDot /><SplitterDot /><SplitterDot /></Splitter>
      <LowerPanel>
        <Window>
          <PanelTitle>Fichero</PanelTitle>

          <TitleBar>
            <BarArt width="640" height="42" viewBox="0 0 640 42" aria-hidden="true">
              <defs>
                <linearGradient id="shade" x1="0" x2="1">
                  <stop offset="0" stopColor="#226a42" stopOpacity="0" />
                  <stop offset=".2" stopColor="#226a42" stopOpacity=".5" />
                  <stop offset="1" stopColor="#226a42" />
                </linearGradient>
              </defs>
              <rect width="640" height="42" fill="url(#shade)" />
              <circle cx="557" cy="22" r="29" fill="#23774a" />
              <rect x="586" y="28" width="54" height="14" fill="#23744a" />
              <g fill="#24653f">
                <path d="M42 42c-5-6-3-14-2-20 3-14 10-20 22-21 12 0 18 6 20 14 6-2 9-2 13 1 9-4 25 1 29 9 1 8-4 12-10 17Z" />
                <path d="M163 0h80c7 8 15 26 15 42H152c-2-16 0-28 11-42Z" />
                <path d="M284 0h190c2 14-7 26-22 33l32 1c2 3 0 6-4 8H290c6-4 4-8 9-11-9-8-15-20-15-31Z" />
                <circle cx="577" cy="45" r="14" />
              </g>
            </BarArt>
            <QuickAccess>
              <AutoSave>Autoguardado<Toggle type="checkbox" role="switch" disabled /></AutoSave>
              <BarButton $w={56} aria-label="Guardar"><SaveIcon /></BarButton>
              <BarButton $w={18} aria-label="Deshacer"><UndoIcon /></BarButton>
              <BarButton $w={22} aria-label="Opciones de deshacer"><Chevron color="#3d8a5c" /></BarButton>
              <BarButton $w={28} aria-label="Rehacer"><UndoIcon flip /></BarButton>
              <BarButton $w={14} aria-label="Opciones de rehacer"><Chevron color="#3d8a5c" /></BarButton>
              <BarButton $w={38} aria-label="Personalizar barra de acceso rápido"><CustomizeIcon /></BarButton>
            </QuickAccess>
            <Search>
              <SearchIcon />
              <input type="search" placeholder="Buscar" aria-label="Buscar" />
            </Search>
          </TitleBar>

          <TabBar>
            <Tabs>{MENU.map((name, i) => <Tab key={name} $active={i === 0}>{name}</Tab>)}</Tabs>
            <TabActions>
              <ActionButton $w={119} disabled><ShareIcon />Compartir</ActionButton>
              <ActionButton $w={139}><CommentIcon />Comentarios</ActionButton>
            </TabActions>
          </TabBar>

          <RibbonTools />

          <FormulaBar>
            <Field $w={127} $pad={6} $end={8}>
              <input defaultValue="C15" aria-label="Cuadro de nombres" />
              <button aria-label="Nombres definidos"><Triangle dir="down" /></button>
            </Field>
            <Grip $w={37}><i /><i /><i /></Grip>
            <FormulaKeys>
              <FormulaKey aria-label="Cancelar"><CancelIcon /></FormulaKey>
              <FormulaKey aria-label="Introducir"><CheckIcon /></FormulaKey>
              <Fx aria-label="Insertar función">f<small>x</small></Fx>
            </FormulaKeys>
            <Field $pad={13} $end={5}>
              <input defaultValue="12/11/2020" aria-label="Barra de fórmulas" />
              <button aria-label="Expandir barra de fórmulas">
                <Svg w={9} h={7} stroke="#6a6a6a" strokeWidth="2.5"><path d="M.8 1.2 4.5 5 8.2 1.2" /></Svg>
              </button>
            </Field>
          </FormulaBar>

          <SheetArea>
            <Viewport><SheetGrid /></Viewport>
            <VScroll>
              <ScrollKey aria-label="Subir"><Triangle dir="up" /></ScrollKey>
              <Thumb $vertical />
              <ScrollKey aria-label="Bajar"><Triangle dir="down" /></ScrollKey>
            </VScroll>
          </SheetArea>

          <SheetBar>
            <SheetNav>
              <button aria-label="Hoja anterior"><Triangle dir="left" color="#b9b9b9" /></button>
              <button aria-label="Hoja siguiente"><Triangle dir="right" color="#0e5c35" /></button>
            </SheetNav>
            {SHEETS.map(([name, w], i) => {
              const last = i === SHEETS.length - 1;
              return (
                <SheetTab key={name} $w={w} $active={i === 0} $last={last}>
                  {name}{last && <MoreSheets>...</MoreSheets>}
                </SheetTab>
              );
            })}
            <AddSheet aria-label="Nueva hoja"><PlusIcon /></AddSheet>
            <Grip $w={31}><i /><i /><i /></Grip>
            <HScroll>
              <ScrollKey aria-label="Izquierda"><Triangle dir="left" /></ScrollKey>
              <Thumb />
              <ScrollKey aria-label="Derecha"><Triangle dir="right" /></ScrollKey>
            </HScroll>
          </SheetBar>
        </Window>
      </LowerPanel>
    </Page>
  );
}
